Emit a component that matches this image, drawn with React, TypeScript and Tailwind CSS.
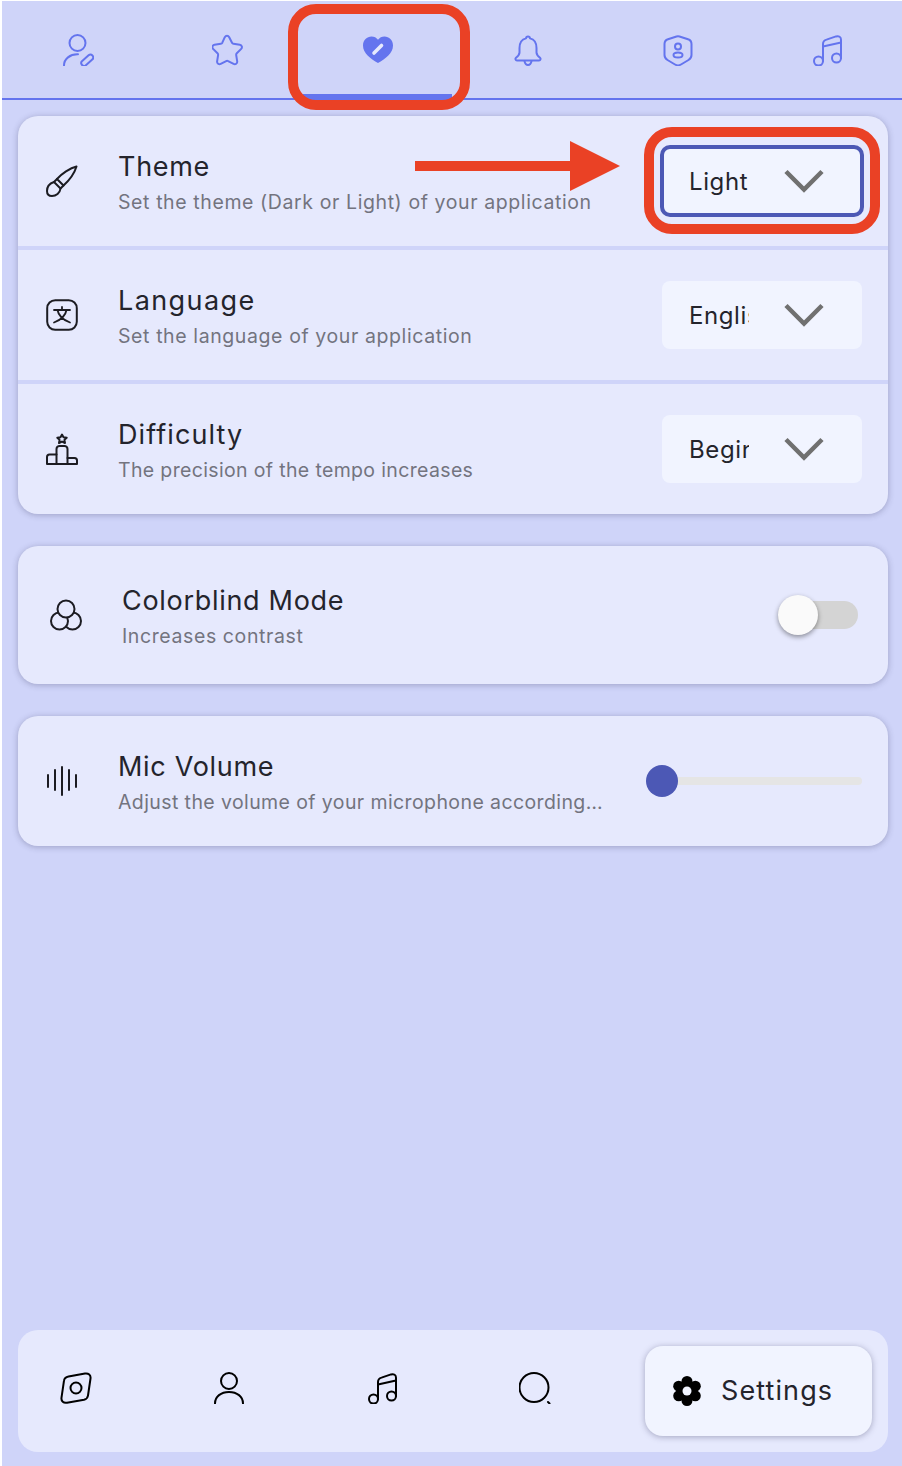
import React from "react";

const S = ({ children, className = "", size = 32 }: { children: React.ReactNode; className?: string; size?: number }) => (
  <svg width={size} height={size} viewBox="0 0 32 32" fill="none" stroke="currentColor" strokeWidth="2" strokeLinecap="round" strokeLinejoin="round" className={className}>
    {children}
  </svg>
);

const UserEdit = () => (
  <S>
    <circle cx="15.5" cy="9" r="8" />
    <path d="M2 31.5C2 25 8 20 16 20.3" />
    <rect x="18" y="23.6" width="14" height="5.500" rx="2.700" transform="rotate(-42 25 26)" />
  </S>
);
const Star = () => (
  <S>
    <g transform="translate(-1 0)">
      <path d="M13.8 3.2c1-1.800 3.400-1.800 4.400 0l2.800 5.500c.3.6.9 1 1.500 1.100l6.300 1c2 .3 2.800 2.700 1.400 4.100l-4.400 4.400c-.5.5-.7 1.100-.6 1.800l1 6.200c.3 2-1.800 3.500-3.600 2.600l-5.500-2.800c-.6-.3-1.300-.3-1.900 0l-5.500 2.800c-1.800.9-3.900-.6-3.600-2.600l1-6.200c.1-.7-.1-1.300-.6-1.800l-4.400-4.400c-1.400-1.400-.6-3.800 1.400-4.100l6.300-1c.6-.1 1.200-.5 1.500-1.100z" />
    </g>
  </S>
);
const HeartPen = () => (
  <svg width="32" height="32" viewBox="0 0 32 32">
    <path fill="#6474ee" d="M16 29C9 25 1 19.500 1 11.500 1 6 5 2.500 9.500 2.500c2.700 0 5 1.200 6.500 3.300 1.500-2.100 3.800-3.300 6.500-3.300C27 2.500 31 6 31 11.500 31 19.500 23 25 16 29z" />
    <path d="M12 19l7.500-7.500" stroke="#e6e9fd" strokeWidth="3.600" strokeLinecap="round" />
  </svg>
);
const Bell = () => (
  <S>
    <g transform="translate(1 0)">
      <path d="M16 2.500c-1.100 0-1.900.8-2 1.900C9.500 5.500 7.500 9.500 7.500 14v4.500c0 2.300-1.500 3.600-3.500 5.300-1.100 1-.5 2.700 1 2.700h22c1.500 0 2.100-1.700 1-2.700-2-1.700-3.500-3-3.500-5.300V14c0-4.500-2-8.500-6.500-9.600-.1-1.100-.9-1.900-2-1.900z" />
      <path d="M12.500 27c.5 2.800 2 4 3.500 4s3-1.200 3.500-4" />
    </g>
  </S>
);
const Shield = () => (
  <S>
    <g transform="translate(1 0)">
      <path d="M14.500 2.500 6 5.200C3.500 6 2.500 7.500 2.500 10v11c0 2.300 1 3.800 3 5l7.500 4.500c2 1.200 4 1.200 6 0l7.500-4.500c2-1.200 3-2.700 3-5V10c0-2.500-1-4-3.500-4.800l-8.500-2.700c-1-.3-2-.3-3 0z" />
      <circle cx="16" cy="12.500" r="3" />
      <ellipse cx="16" cy="21" rx="4.500" ry="2.500" />
    </g>
  </S>
);
const Music = () => (
  <S>
    <circle cx="7.500" cy="27" r="4.500" />
    <circle cx="25.500" cy="24" r="4.500" />
    <path d="M12 27V10c0-2.500 1.200-3.800 3.500-4.400l9.500-3.200c3-.6 5 .4 5 3.400V24" />
    <path d="M12 12.500 30 8.500" />
  </S>
);
const Brush = () => (
  <S>
    <path d="M30.500 1.500C24 3 15.500 9 11 14l6.500 6.500C22.500 16 28.500 8 30.500 1.500z" />
    <path d="M8 17l6.500 6.500" />
    <path d="M11 14l-3 3C3.500 18.500 1 22 1 26c0 3 2 5 5 5 4 0 8-3 8.500-7.500l3-3" />
  </S>
);
const Lang = () => (
  <S>
    <rect x="1.200" y="1.200" width="29.600" height="29.600" rx="8" />
    <path d="M16 8v2.500M8 11h16M11.500 11c1 6 6 10 12.500 12.500M20.500 11c-1 6-6 10-12.500 12.500" strokeWidth="1.800" />
  </S>
);
const Podium = () => (
  <S>
    <path d="M16 1.500l1.500 2.700 3.200.5-2.300 2.200.6 3.100-3-1.400-3 1.400.6-3.100-2.300-2.200 3.200-.5z" />
    <path d="M1 31V24c0-1.500 1-2.500 2.500-2.500H10.500V16c0-1.800 1.500-3 3-3h5c1.500 0 3 1.200 3 3v9h7c1.500 0 2.500 1 2.500 2.500V31z" />
    <path d="M10.500 21.500V31M21.500 25v6" />
  </S>
);
const Circles = () => (
  <S>
    <circle cx="22.500" cy="22" r="8.500" fill="#e6e9fd" />
    <circle cx="9.500" cy="22" r="8.500" fill="#e6e9fd" />
    <circle cx="16" cy="10" r="8.500" fill="#e6e9fd" />
  </S>
);
const Wave = () => (
  <S>
    <path d="M2 10v12M9 5v20M16 2v28M23 5v20M30 10v12" />
  </S>
);
const Disc = () => (
  <S>
    <path d="M8.500 4.500 25 1.500c3.500-.5 6 1.500 5.500 5l-2.500 17c-.3 2.500-1.500 3.700-4 4.300L7 30.700c-3.500.7-6-1.500-5.500-5l2.500-17c.3-2.500 1.800-3.700 4.500-4.200z" />
    <circle cx="16" cy="16" r="5.500" />
  </S>
);
const User = () => (
  <S>
    <circle cx="16" cy="9" r="8" />
    <path d="M2 31.500C2 24.500 8 20 16 20s14 4.500 14 11.500" />
  </S>
);
const Search = () => (
  <S>
    <circle cx="15" cy="15.500" r="14.500" />
    <path d="M29 30l1.500 1.500" />
  </S>
);
const Gear = () => (
  <svg width="32" height="32" viewBox="0 0 32 32">
    <g fill="#000">
      <circle cx="16" cy="16" r="10.500" />
      <circle cx="16" cy="6.500" r="5.500" />
      <circle cx="16" cy="25.500" r="5.500" />
      <circle cx="7.700" cy="11.200" r="5.500" />
      <circle cx="24.300" cy="11.200" r="5.500" />
      <circle cx="7.700" cy="20.800" r="5.500" />
      <circle cx="24.300" cy="20.800" r="5.500" />
    </g>
    <circle cx="16" cy="16" r="4.500" fill="#f1f4ff" />
  </svg>
);

const Chevron = () => (
  <svg width="40" height="24" viewBox="0 0 40 24" fill="none" stroke="#707070" strokeWidth="4.500">
    <path d="M2 2.500 20 20.500 38 2.500" />
  </svg>
);

const Text = ({ title, sub, titleTrack = "tracking-[0.7px]", subTrack = "tracking-[0.6px]" }: { title: string; sub: string; titleTrack?: string; subTrack?: string }) => (
  <div className="flex flex-col pt-[6px]">
    <div className={`text-[27px] leading-[36px] text-[#24242c] ${titleTrack}`}>{title}</div>
    <div className={`text-[19.500px] leading-[35px] text-[#73747f] whitespace-nowrap ${subTrack}`}>{sub}</div>
  </div>
);

const Select = ({ value, active }: { value: string; active?: boolean }) => (
  <div className={`flex items-center w-[200px] h-[68px] rounded-lg bg-[#f1f4ff] pl-[27px] pr-[38px] justify-between ${active ? "outline-[4px] outline-offset-[-2px] outline-[#4c58b5]" : ""}`}>
    <span className="w-[60px] pt-px overflow-hidden whitespace-nowrap text-[24px] text-[#24242c] tracking-[0.6px]">{value}</span>
    <Chevron />
  </div>
);

const Row = ({ icon, title, sub, value, active, titleTrack, subTrack }: { icon: React.ReactNode; title: string; sub: string; value: string; active?: boolean; titleTrack?: string; subTrack?: string }) => (
  <div className="flex items-center justify-between h-[130px] pl-[28px] pr-[26px]">
    <div className="flex items-center gap-[40px] text-[#1c1c22]">
      {icon}
      <Text title={title} sub={sub} titleTrack={titleTrack} subTrack={subTrack} />
    </div>
    <Select value={value} active={active} />
  </div>
);

const card = "bg-[#e6e9fd] rounded-[20px] shadow-[0_1px_6px_rgba(40,40,80,0.3)]";

export default function App() {
  return (
    <div className="relative w-[902px] h-[1466px] overflow-hidden bg-white" style={{ fontFamily: '"Inter", "Noto Sans", sans-serif' }}>
      <div className="ml-[2px] mt-[1px] h-[1465px] bg-[#cfd4f9] flex flex-col">
        <div className="flex h-[99px] border-b-2 border-[#6474ee] text-[#6474ee] pl-px">
          {[<UserEdit />, <Star />, <HeartPen />, <Bell />, <Shield />, <Music />].map((ic, i) => (
            <div key={i} className="relative w-[150px] flex justify-center pt-[33px]">
              {ic}
              {i === 2 && <div className="absolute left-0 right-0 -bottom-[2px] h-[6px] bg-[#6474ee]" />}
            </div>
          ))}
        </div>

        <div className="flex flex-col flex-1 pl-4 pr-[14px] pt-4 pb-[14px]">
          <div className={card}>
            <Row icon={<Brush />} title="Theme" sub="Set the theme (Dark or Light) of your application" value="Light" active />
            <div className="h-1 bg-[#cfd4f9]" />
            <Row icon={<Lang />} title="Language" sub="Set the language of your application" value="English" titleTrack="tracking-[1.4px]" />
            <div className="h-1 bg-[#cfd4f9]" />
            <Row icon={<Podium />} title="Difficulty" sub="The precision of the tempo increases" value="Beginner" titleTrack="tracking-[1.100px]" subTrack="tracking-[0.35px]" />
          </div>

          <div className={`${card} mt-8 h-[138px] flex items-center justify-between pl-[32px] pr-[30px]`}>
            <div className="flex items-center gap-[40px] text-[#1c1c22]">
              <Circles />
              <Text title="Colorblind Mode" sub="Increases contrast" />
            </div>
            <div className="relative w-[80px] h-[28px] rounded-full bg-[#d4d4d4]">
              <div className="absolute left-0 -top-[6px] w-10 h-10 rounded-full bg-[#fafafa] shadow-[0_2px_5px_rgba(0,0,0,0.4)]" />
            </div>
          </div>

          <div className={`${card} mt-8 h-[130px] flex items-center justify-between pl-[28px] pr-[26px]`}>
            <div className="flex items-center gap-[40px] text-[#1c1c22]">
              <Wave />
              <Text title="Mic Volume" sub="Adjust the volume of your microphone according…" subTrack="tracking-[0.4px]" />
            </div>
            <div className="relative w-[216px] h-2 rounded-full bg-[#e5e5e5]">
              <div className="absolute left-0 -top-3 w-8 h-8 rounded-full bg-[#4c58b5]" />
            </div>
          </div>

          <div className="mt-auto h-[122px] rounded-[20px] bg-[#e6e9fd] flex items-center pl-[42px] pr-4 text-black">
            <div className="flex items-center gap-[121px] pb-[6px]">
              <Disc />
              <User />
              <Music />
              <Search />
            </div>
            <div className="ml-auto w-[227px] h-[90px] rounded-[18px] bg-[#f1f4ff] shadow-[0_1px_6px_rgba(40,40,80,0.35)] flex items-center pl-[26px] gap-[18px]">
              <Gear />
              <span className="text-[27px] text-[#24242c] tracking-[1.100px]">Settings</span>
            </div>
          </div>
        </div>
      </div>

      <div className="absolute left-[288px] top-[4px] w-[182px] h-[106px] rounded-[28px] border-[10px] border-[#ea4125]" />
      <div className="absolute left-[644px] top-[127px] w-[236px] h-[107px] rounded-[28px] border-[10px] border-[#ea4125]" />
      <svg className="absolute left-[415px] top-[141px]" width="206" height="50" viewBox="0 0 206 50">
        <path d="M0 20h155V0l50 25-50 25V30H0z" fill="#ea4125" />
      </svg>
    </div>
  );
}
